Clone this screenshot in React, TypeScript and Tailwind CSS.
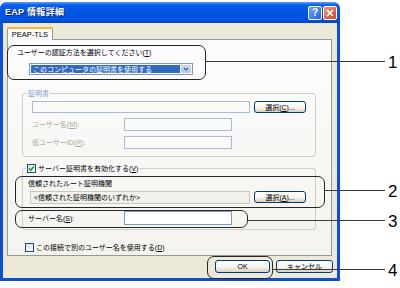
import React from 'react';

const font = "font-['Liberation_Sans','Noto_Sans_CJK_JP',sans-serif]";

const XpButton = ({ children, className = '' }: { children: React.ReactNode; className?: string }) => (
  <div
    className={`h-[12px] rounded-[3px] border border-[#003C74] bg-[linear-gradient(to_bottom,#FFFFFF_0%,#F5F4EF_55%,#D8D2C6_100%)] flex items-center justify-center text-[7px] leading-none text-black ${className}`}
  >
    {children}
  </div>
);

const Checkbox = ({ checked }: { checked?: boolean }) => (
  <div className="w-[9px] h-[9px] border border-[#1C5180] bg-[linear-gradient(135deg,#DCDCD7,#FFFFFF)] flex items-center justify-center">
    {checked && (
      <svg width="7" height="7" viewBox="0 0 7 7">
        <path d="M1 3.4 L2.8 5.2 L6 1.4" stroke="#21A121" strokeWidth="1.6" fill="none" />
      </svg>
    )}
  </div>
);

const Callout = ({ box, line, num }: { box: string; line: string; num: string }) => (
  <>
    <div className={`absolute border-[1.5px] border-[#262626] rounded-[7px] ${box}`} />
    <div className={`absolute h-px bg-[#3a3a3a] ${line}`} />
  </>
);

const App = () => {
  return (
    <div className={`relative w-[400px] h-[288px] bg-white overflow-hidden ${font}`}>
      {/* window */}
      <div className="mt-[2px] w-[340px] h-[279px] flex flex-col rounded-t-[7px] bg-[#0B4FDC]">
        <div className="h-[21px] flex items-center justify-between pl-[5px] pr-[3px] rounded-t-[7px] bg-[linear-gradient(to_bottom,#5AA0FF_0%,#0A5EEC_14%,#0054E3_50%,#0052DE_85%,#0046C4_100%)]">
          <span className="text-white font-bold text-[9px] leading-none [text-shadow:1px_1px_0_#0A1F70] tracking-[0.3px]">EAP 情報詳細</span>
          <div className="flex gap-[1px]">
            <div className="w-[14px] h-[14px] rounded-[2px] border border-white bg-[linear-gradient(135deg,#6FA3FF,#1F5FE8)] flex items-center justify-center text-white text-[10px] font-bold leading-none">?</div>
            <div className="w-[14px] h-[14px] rounded-[2px] border border-white bg-[linear-gradient(135deg,#F09A7E,#D6401F)] flex items-center justify-center">
              <svg width="8" height="8" viewBox="0 0 8 8">
                <path d="M1 1 L7 7 M7 1 L1 7" stroke="white" strokeWidth="1.7" />
              </svg>
            </div>
          </div>
        </div>

        <div className="mx-[3px] mb-[3px] flex-1 bg-[#ECE9D8] flex flex-col pt-[4px] pl-[4px]">
          {/* tab */}
          <div className="w-[46px] h-[13px] -mb-px relative z-10 bg-[#FCFCFE] border-x border-[#919B9C] border-t-2 border-t-[#F3B63C] rounded-t-[2px] flex items-center justify-center text-[7.5px] leading-none text-black">
            PEAP-TLS
          </div>
          {/* panel */}
          <div className="w-[325px] h-[217px] border border-[#919B9C] bg-[linear-gradient(to_bottom,#FCFCFE,#F4F3EE)] flex flex-col">
            <div className="mt-[8px] ml-[9px] h-[9px] text-[7px] leading-[9px] text-black">
              ユーザーの認証方法を選択してください(<u>T</u>)
            </div>
            <div className="mt-[6px] ml-[21px] w-[164px] h-[12px] border border-[#7F9DB9] bg-white flex p-px">
              <div className="flex-1 bg-[#316AC5] text-white text-[7px] leading-[10px] pl-[2px] whitespace-nowrap overflow-hidden">
                このコンピュータの証明書を使用する
              </div>
              <div className="w-[10px] ml-px rounded-[1px] bg-[linear-gradient(to_bottom,#D6E3FD,#B3C9F6)] border border-[#B4C9F7] flex items-center justify-center">
                <svg width="6" height="4" viewBox="0 0 6 4">
                  <path d="M0.8 0.8 L3 3 L5.2 0.8" stroke="#4D6185" strokeWidth="1.3" fill="none" />
                </svg>
              </div>
            </div>

            {/* 証明書 group */}
            <div className="relative mt-[18px] ml-[14px] w-[294px] h-[64px] border border-[#D0D0BF] rounded-[3px] flex flex-col">
              <span className="absolute -top-[5px] left-[4px] px-px bg-[#FBFBFA] text-[7px] leading-[9px] text-[#7C98DC]">証明書</span>
              <div className="mt-[7px] ml-[9px] flex gap-[4px]">
                <div className="w-[218px] h-[12px] border border-[#A9BCD6] bg-[#FAFAF8]" />
                <XpButton className="w-[52px]">選択(<u>C</u>)...</XpButton>
              </div>
              <div className="mt-[5px] ml-[9px] flex items-center">
                <span className="w-[92px] text-[7px] leading-[9px] text-[#ACA899]">ユーザー名(<u>M</u>):</span>
                <div className="w-[108px] h-[13px] border border-[#A9BCD6] bg-[#FAFAF8]" />
              </div>
              <div className="mt-[5px] ml-[9px] flex items-center">
                <span className="w-[92px] text-[7px] leading-[9px] text-[#ACA899]">仮ユーザーID(<u>R</u>):</span>
                <div className="w-[108px] h-[13px] border border-[#A9BCD6] bg-[#FAFAF8]" />
              </div>
            </div>

            {/* server cert group */}
            <div className="relative mt-[11px] ml-[14px] w-[294px] h-[62px] border border-[#D0D0BF] rounded-[3px] flex flex-col">
              <div className="absolute -top-[5px] left-[3px] px-px bg-[#F9F9F7] flex items-center gap-[2px]">
                <Checkbox checked />
                <span className="text-[7px] leading-[9px] text-black">サーバー証明書を有効化する(<u>V</u>)</span>
              </div>
              <div className="mt-[10px] ml-[5px] h-[9px] text-[7px] leading-[9px] text-black">信頼されたルート証明機関</div>
              <div className="mt-[3px] ml-[7px] flex gap-[4px] items-start">
                <div className="w-[220px] h-[13px] border border-[#C9C7BA] bg-[#F2F1EC] text-[7px] leading-[11px] pl-[3px] text-black">
                  &lt;信頼された証明機関のいずれか&gt;
                </div>
                <XpButton className="w-[52px]">選択(<u>A</u>)...</XpButton>
              </div>
              <div className="mt-[7px] ml-[5px] flex items-center">
                <span className="w-[96px] text-[7px] leading-[9px] text-black">サーバー名(<u>S</u>):</span>
                <div className="w-[108px] h-[14px] border border-[#7F9DB9] bg-white" />
              </div>
            </div>

            <div className="mt-[13px] ml-[17px] flex items-center gap-[2px]">
              <Checkbox />
              <span className="text-[7px] leading-[9px] text-black">この接続で別のユーザー名を使用する(<u>D</u>)</span>
            </div>
          </div>

          {/* buttons */}
          <div className="mt-[4px] pr-[4px] flex justify-end gap-[6px]">
            <XpButton className="w-[55px] h-[13px]">OK</XpButton>
            <XpButton className="w-[57px] h-[13px]">キャンセル</XpButton>
          </div>
        </div>
      </div>

      {/* callouts */}
      <Callout box="left-[7px] top-[45px] w-[199px] h-[35px]" line="left-[206px] top-[61px] w-[179px]" num="1" />
      <Callout box="left-[15px] top-[176px] w-[310px] h-[32px]" line="left-[325px] top-[190px] w-[60px]" num="2" />
      <Callout box="left-[15px] top-[210px] w-[233px] h-[18px]" line="left-[248px] top-[220px] w-[137px]" num="3" />
      <Callout box="left-[207px] top-[256px] w-[66px] h-[23px]" line="left-[273px] top-[269px] w-[112px]" num="4" />
      <span className="absolute left-[388px] top-[54px] text-[17px] leading-none text-black">1</span>
      <span className="absolute left-[388px] top-[183px] text-[17px] leading-none text-black">2</span>
      <span className="absolute left-[388px] top-[213px] text-[17px] leading-none text-black">3</span>
      <span className="absolute left-[388px] top-[262px] text-[17px] leading-none text-black">4</span>
    </div>
  );
};

export default App;
